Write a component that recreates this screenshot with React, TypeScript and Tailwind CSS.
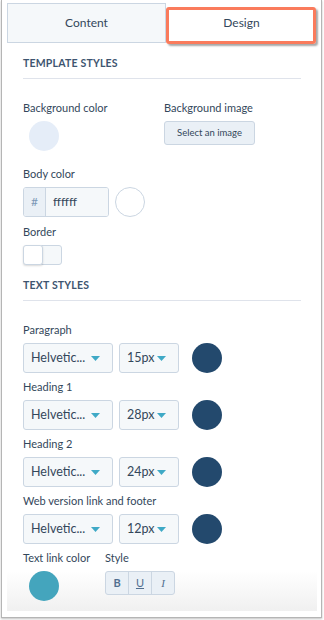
const font = { fontFamily: "Lato, 'Open Sans', 'Liberation Sans', sans-serif" };

function Label({ children, className = "" }: { children: React.ReactNode; className?: string }) {
  return <div className={`h-[14px] text-[11px] leading-[14px] text-[#33475b] ${className}`}>{children}</div>;
}

function Caret() {
  return (
    <svg width="9" height="5" viewBox="0 0 9 5" className="shrink-0">
      <path d="M0 0h9L4.5 5z" fill="#3fa9c6" />
    </svg>
  );
}

function FontRow({ size }: { size: string }) {
  return (
    <div className="mt-[6px] flex h-[30px] items-center">
      <div className="flex h-[30px] w-[90px] items-center justify-between rounded-[3px] border border-[#cbd6e2] bg-[#f5f8fa] pl-[7px] pr-[12px] text-[12.5px] text-[#33475b]">
        <span>Helvetic...</span>
        <Caret />
      </div>
      <div className="ml-[6px] flex h-[30px] w-[60px] items-center justify-between rounded-[3px] border border-[#cbd6e2] bg-[#f5f8fa] pl-[7px] pr-[12px] text-[12.5px] text-[#33475b]">
        <span>{size}</span>
        <Caret />
      </div>
      <div className="ml-[13px] h-[30px] w-[30px] rounded-full bg-[#23496d]" />
    </div>
  );
}

export default function App() {
  return (
    <div className="h-[620px] w-[324px] bg-white" style={font}>
      <div className="ml-[1px] flex h-[618px] w-[321px] flex-col border-x border-b border-[#b5b5b5] px-[5px] pr-[4px] pb-[6px] shadow-[0_1px_2px_rgba(0,0,0,0.25)]">
        <div className="flex flex-1 flex-col">
          {/* tabs */}
          <div className="relative mt-[3px] flex h-[40px]">
            <div className="flex w-[159px] items-center justify-center border border-[#cbd6e2] bg-[#f5f8fa] text-[12px] text-[#33475b]">
              Content
            </div>
            <div className="flex flex-1 items-center justify-center text-[12px] text-[#33475b]">Design</div>
            <div className="absolute left-[159px] top-[4px] h-[37px] w-[150px] rounded-[3px] border-[3px] border-[#fa7b5c] shadow-[2px_2px_2px_rgba(0,0,0,0.35)]" />
          </div>

          <div className="flex flex-1 flex-col px-[16px]">
            <div className="mt-[13px] h-[14px] text-[10.5px] font-bold leading-[14px] tracking-[0.2px] text-[#3e5570]">
              TEMPLATE STYLES
            </div>
            <div className="mt-[8px] border-b border-[#dfe3eb]" />

            <div className="mt-[22px] flex">
              <div className="w-[141px]">
                <Label>Background color</Label>
                <div className="ml-[6px] mt-[6px] h-[30px] w-[30px] rounded-full bg-[#e5edf8]" />
              </div>
              <div>
                <Label>Background image</Label>
                <div className="mt-[6px] flex h-[24px] w-[91px] items-center justify-center rounded-[3px] border border-[#cbd6e2] bg-[#eaf0f6] text-[9.5px] text-[#33475b]">
                  Select an image
                </div>
              </div>
            </div>

            <Label className="mt-[16px]">Body color</Label>
            <div className="mt-[6px] flex items-center">
              <div className="flex h-[30px] w-[86px] overflow-hidden rounded-[3px] border border-[#cbd6e2] text-[12px]">
                <div className="flex w-[22px] items-center justify-center border-r border-[#cbd6e2] bg-[#eaf0f6] text-[#7c98b6]">
                  #
                </div>
                <div className="flex flex-1 items-center bg-[#f5f8fa] pl-[7px] text-[#33475b]">ffffff</div>
              </div>
              <div className="ml-[6px] h-[30px] w-[30px] rounded-full border border-[#cbd6e2] bg-white" />
            </div>

            <Label className="mt-[8px]">Border</Label>
            <div className="relative mt-[6px] h-[20px] w-[39px]">
              <div className="absolute left-[18px] top-0 h-[20px] w-[21px] rounded-r-[3px] border border-[#cbd6e2] bg-[#f5f8fa]" />
              <div className="absolute left-0 top-0 h-[20px] w-[20px] rounded-[3px] border border-[#cbd6e2] bg-white shadow-[0_1px_2px_rgba(0,0,0,0.15)]" />
            </div>

            <div className="mt-[13px] h-[14px] text-[10.5px] font-bold leading-[14px] tracking-[0.2px] text-[#3e5570]">
              TEXT STYLES
            </div>
            <div className="mt-[8px] border-b border-[#dfe3eb]" />

            <Label className="mt-[22px]">Paragraph</Label>
            <FontRow size="15px" />
            <Label className="mt-[7px]">Heading 1</Label>
            <FontRow size="28px" />
            <Label className="mt-[7px]">Heading 2</Label>
            <FontRow size="24px" />
            <Label className="mt-[7px]">Web version link and footer</Label>
            <FontRow size="12px" />
          </div>

          <div className="flex flex-1 bg-gradient-to-b from-white from-40% to-[#f0f0f0] px-[16px] pt-[7px]">
            <div className="w-[82px]">
              <Label>Text link color</Label>
              <div className="ml-[6px] mt-[6px] h-[30px] w-[30px] rounded-full bg-[#44a5bd]" />
            </div>
            <div>
              <Label>Style</Label>
              <div className="mt-[6px] flex h-[24px] w-[70px] overflow-hidden rounded-[3px] border border-[#cbd6e2] bg-[#eaf0f6] text-[11px] text-[#516f90]">
                <div className="flex flex-1 items-center justify-center border-r border-[#cbd6e2] font-bold">B</div>
                <div className="flex flex-1 items-center justify-center border-r border-[#cbd6e2] underline">U</div>
                <div className="flex flex-1 items-center justify-center font-['Liberation_Serif'] italic">I</div>
              </div>
            </div>
          </div>
        </div>
      </div>
    </div>
  );
}
